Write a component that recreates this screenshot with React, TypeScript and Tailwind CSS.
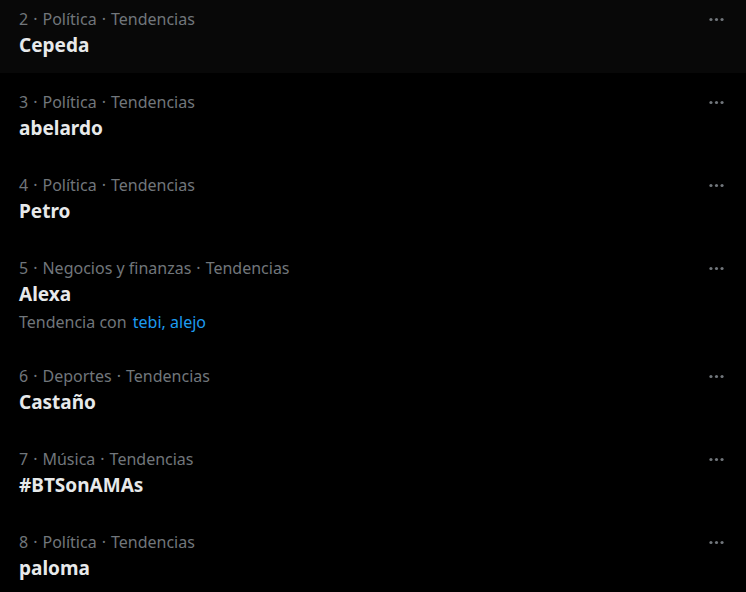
const trends = [
  { rank: 2, cat: "Política", name: "Cepeda", active: true },
  { rank: 3, cat: "Política", name: "abelardo" },
  { rank: 4, cat: "Política", name: "Petro" },
  { rank: 5, cat: "Negocios y finanzas", name: "Alexa", with: ["tebi", "alejo"] },
  { rank: 6, cat: "Deportes", name: "Castaño" },
  { rank: 7, cat: "Música", name: "#BTSonAMAs" },
  { rank: 8, cat: "Política", name: "paloma" },
];

function MoreIcon() {
  return (
    <svg viewBox="0 0 24 24" className="h-[19px] w-[19px] fill-current">
      <circle cx="5" cy="12" r="2" />
      <circle cx="12" cy="12" r="2" />
      <circle cx="19" cy="12" r="2" />
    </svg>
  );
}

function Dot() {
  return <span className="mx-[5px]">·</span>;
}

export default function App() {
  return (
    <div
      className="min-h-screen overflow-hidden bg-black"
      style={{ fontFamily: '"Noto Sans", "Open Sans", sans-serif' }}
    >
      <div className="-mt-[10px]">
        {trends.map((t) => (
          <div
            key={t.rank}
            className={`flex items-start justify-between pl-[19px] pr-[12px] pt-[19px] pb-[15px] ${
              t.active ? "bg-[#080808]" : ""
            }`}
          >
            <div className="flex flex-col">
              <div className="text-[16px] leading-[20px] text-[#71767b]">
                {t.rank}
                <Dot />
                {t.cat}
                <Dot />
                Tendencias
              </div>
              <div className="mt-[4px] text-[19px] font-bold leading-[25px] text-[#e7e9ea]">
                {t.name}
              </div>
              {t.with && (
                <div className="mt-[5px] text-[16px] leading-[20px] text-[#71767b]">
                  Tendencia con{" "}
                  <span className="ml-[2px] text-[#1d9bf0]">
                    {t.with.join(", ")}
                  </span>
                </div>
              )}
            </div>
            <div className="-mt-[8px] flex h-[36px] w-[36px] items-center justify-center text-[#71767b]">
              <MoreIcon />
            </div>
          </div>
        ))}
      </div>
    </div>
  );
}
